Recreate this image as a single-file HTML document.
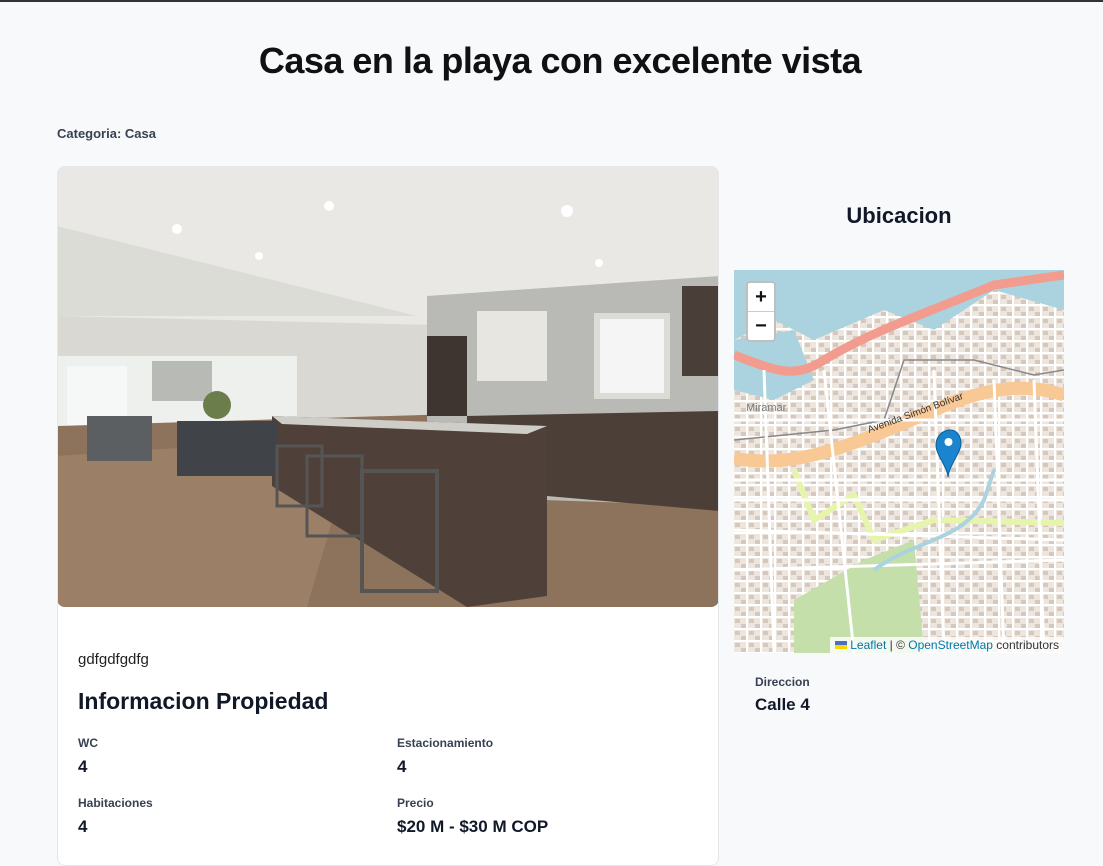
<!DOCTYPE html>
<html><head><meta charset="utf-8"><style>
*{margin:0;padding:0;box-sizing:border-box}
body{width:1103px;height:859px;background:#f8f9fb;font-family:"Liberation Sans",sans-serif;color:#111;overflow:hidden;position:relative}
.topline{position:absolute;left:0;top:0;width:1103px;height:2px;background:#333}
h1{position:absolute;top:40px;left:0;width:1120px;text-align:center;font-size:36px;font-weight:bold;letter-spacing:-0.5px}
.cat{position:absolute;left:57px;top:126px;font-size:13px;font-weight:bold;color:#374151}
.card{position:absolute;left:57px;top:166px;width:662px;height:700px;background:#fff;border:1px solid #e5e7eb;border-radius:8px;overflow:hidden}
.photo{position:absolute;left:-1px;top:-1px;width:662px;height:441px;border-radius:8px;overflow:hidden}
.lbl{position:absolute;font-size:12px;font-weight:bold;color:#374151}
.val{position:absolute;font-size:17px;font-weight:bold;color:#111827}
</style></head><body>
<div class="topline"></div>
<h1>Casa en la playa con excelente vista</h1>
<div class="cat">Categoria: Casa</div>
<div class="card">
<div class="photo">
<svg width="662" height="441" viewBox="0 0 662 441">
<rect width="662" height="441" fill="#d9d8d3"/>
<polygon points="0,0 662,0 662,110 420,160 0,150" fill="#e9e8e4"/>
<polygon points="0,60 360,150 0,150" fill="#dcdcd7"/>
<rect x="0" y="190" width="240" height="80" fill="#eef0ee"/>
<rect x="10" y="200" width="60" height="60" fill="#f6f8f7"/>
<rect x="95" y="195" width="60" height="40" fill="#b8bbb5"/>
<polygon points="0,260 662,240 662,441 0,441" fill="#8e735c"/>
<polygon points="0,290 300,270 250,441 0,441" fill="#9b7f66"/>
<polygon points="370,130 662,110 662,340 370,330" fill="#b9b9b6"/>
<rect x="420" y="145" width="70" height="70" fill="#e8e6e0"/>
<rect x="540" y="150" width="70" height="80" fill="#f4f5f4" stroke="#dcdcd6" stroke-width="6"/>
<rect x="625" y="120" width="37" height="90" fill="#4a3e38"/>
<rect x="370" y="170" width="40" height="80" fill="#3e3430"/>
<polygon points="410,250 662,245 662,345 490,330 410,260" fill="#4b3f38"/>
<polygon points="215,250 490,260 490,430 410,441 215,320" fill="#4f4139"/>
<polygon points="215,250 490,260 470,268 225,258" fill="#cfcdc7"/>
<rect x="30" y="250" width="65" height="45" fill="#5b5f61"/>
<rect x="120" y="255" width="100" height="55" fill="#404448"/>
<rect x="220" y="280" width="45" height="60" fill="none" stroke="#555" stroke-width="3"/>
<rect x="250" y="290" width="55" height="80" fill="none" stroke="#555" stroke-width="3"/>
<rect x="305" y="305" width="75" height="120" fill="none" stroke="#555" stroke-width="4"/>
<circle cx="160" cy="239" r="14" fill="#6c7d4c"/>
<circle cx="120" cy="63" r="5" fill="#fff"/><circle cx="272" cy="40" r="5" fill="#fff"/><circle cx="510" cy="45" r="6" fill="#fff"/><circle cx="542" cy="97" r="4" fill="#fff"/><circle cx="202" cy="90" r="4" fill="#fff"/>
</svg>
</div>
<div style="position:absolute;left:20px;top:484px;font-size:15px;color:#222">gdfgdfgdfg</div>
<div style="position:absolute;left:20px;top:521px;font-size:23px;font-weight:bold;color:#111827">Informacion Propiedad</div>
<div class="lbl" style="left:20px;top:569px">WC</div><div class="val" style="left:20px;top:590px">4</div>
<div class="lbl" style="left:339px;top:569px">Estacionamiento</div><div class="val" style="left:339px;top:590px">4</div>
<div class="lbl" style="left:20px;top:629px">Habitaciones</div><div class="val" style="left:20px;top:650px">4</div>
<div class="lbl" style="left:339px;top:629px">Precio</div><div class="val" style="left:339px;top:650px">$20 M - $30 M COP</div>
</div>
<div style="position:absolute;left:734px;top:203px;width:330px;text-align:center;font-size:22px;font-weight:bold;color:#111827">Ubicacion</div>
<div style="position:absolute;left:734px;top:270px;width:330px;height:383px;overflow:hidden;background:#f0ece6">
<svg width="330" height="383" viewBox="0 0 330 383">
<defs><pattern id="b" width="14" height="12" patternUnits="userSpaceOnUse"><rect width="14" height="12" fill="#ece6df"/><rect x="1" y="1" width="5" height="4" fill="#d6c8bd"/><rect x="7" y="6" width="5" height="4" fill="#d6c8bd"/><rect x="0" y="10" width="14" height="2" fill="#fff"/><rect x="12" y="0" width="2" height="12" fill="#fff"/></pattern></defs>
<rect width="330" height="383" fill="url(#b)"/>
<polygon points="0,0 330,0 330,40 260,20 200,60 150,40 80,70 40,50 0,70" fill="#aad3df"/>
<polygon points="0,70 60,60 80,110 40,130 0,120" fill="#aad3df"/>
<polygon points="60,330 130,290 180,270 190,383 60,383" fill="#c4dfa9"/>
<path d="M0,85 C40,100 60,110 90,90 C140,60 200,40 260,15 L330,5" stroke="#f29c8f" stroke-width="9" fill="none"/>
<path d="M0,188 C60,200 120,175 200,140 C250,118 290,112 330,125" stroke="#f9c995" stroke-width="13" fill="none"/>
<path d="M60,200 L80,250 L120,225 L140,270 L200,250 L330,253" stroke="#e7f5ac" stroke-width="6" fill="none"/>
<path d="M0,170 L100,160 L150,150 L160,120 L170,90 L240,90 L300,105 L330,100" stroke="#888" stroke-width="1.5" fill="none"/>
<path d="M0,150 L330,150 M0,230 L330,230 M0,300 L330,290 M90,100 L120,383 M200,100 L210,383 M260,110 L270,383 M30,100 L40,383 M0,260 L330,270 M0,210 L330,210 M300,110 L310,383" stroke="#fff" stroke-width="3" fill="none"/>
<path d="M140,300 C180,270 230,270 250,230 L260,200" stroke="#aad3df" stroke-width="4" fill="none"/>
<text x="12" y="141" font-size="11" fill="#777" font-family="Liberation Sans">Miramar</text>
<text x="135" y="163" font-size="10" fill="#333" font-family="Liberation Sans" transform="rotate(-20 135 163)">Avenida Simón Bolívar</text>
<path d="M202,175 C202,166 209,160 216,160 C223,160 227,166 227,174 C227,182 215,196 214,207 C213,196 202,185 202,175Z" fill="#1a84ce" stroke="#0d5d99"/>
<circle cx="214.5" cy="172" r="4" fill="#fff"/>
</svg>
<div style="position:absolute;left:12px;top:11px;width:30px;height:61px;background:#fff;border:2px solid rgba(0,0,0,.25);border-radius:4px;font-size:20px;font-weight:bold;text-align:center;line-height:28px">+<div style="border-top:1px solid #ccc">−</div></div>
<div style="position:absolute;right:0;bottom:0;background:rgba(255,255,255,.8);font-size:12px;padding:1px 5px;color:#333"><span style="display:inline-block;width:12px;height:8px;background:linear-gradient(#4b6ec8 50%,#ffd500 50%)"></span> <span style="color:#0078a8">Leaflet</span> | © <span style="color:#0078a8">OpenStreetMap</span> contributors</div>
</div>
<div class="lbl" style="left:755px;top:675px">Direccion</div>
<div class="val" style="left:755px;top:695px">Calle 4</div>
</body></html>
